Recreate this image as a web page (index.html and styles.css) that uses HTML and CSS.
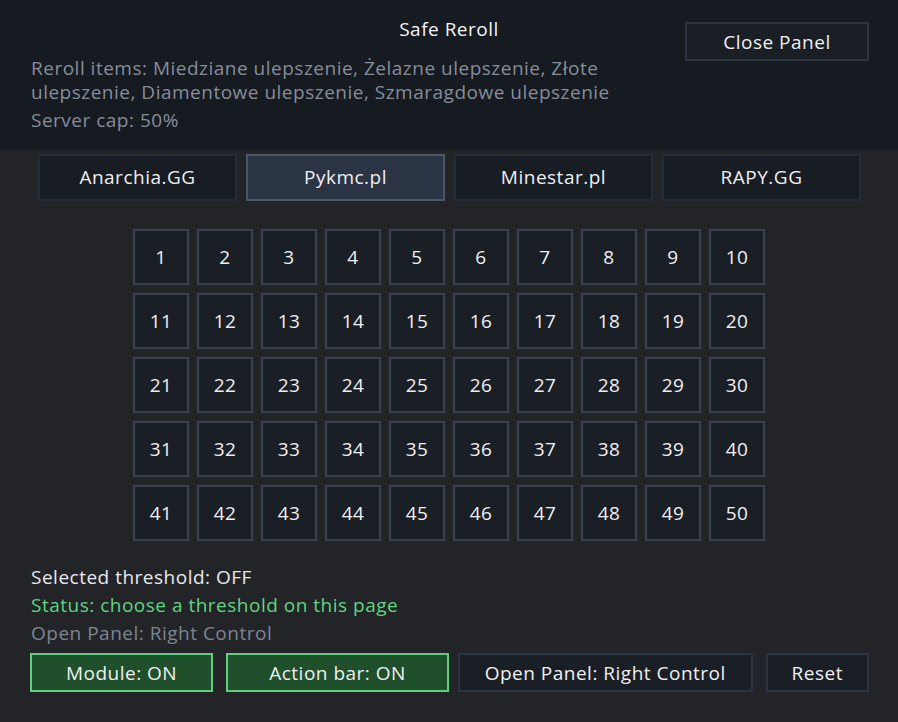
FILE: index.html
```html
<!DOCTYPE html>
<html>
<head>
  <meta charset="UTF-8">
  <meta name="viewport" content="width=device-width, initial-scale=1.0">
  <title>Safe Reroll</title>
  <link rel="stylesheet" href="styles.css">
</head>
<body>
  <div class="panel">
    <div class="header">
      <div class="header-text">
        <h1 class="title">Safe Reroll</h1>
        <p class="info">Reroll items: Miedziane ulepszenie, Żelazne ulepszenie, Złote ulepszenie, Diamentowe ulepszenie, Szmaragdowe ulepszenie</p>
        <p class="info">Server cap: 50%</p>
      </div>
      <button class="btn close-btn">Close Panel</button>
    </div>

    <div class="tabs">
      <button class="tab">Anarchia.GG</button>
      <button class="tab active">Pykmc.pl</button>
      <button class="tab">Minestar.pl</button>
      <button class="tab">RAPY.GG</button>
    </div>

    <div class="grid" id="threshold-grid"></div>

    <div class="state">
      <div class="line">Selected threshold: OFF</div>
      <div class="line status">Status: choose a threshold on this page</div>
      <div class="line muted">Open Panel: Right Control</div>
    </div>

    <div class="actions">
      <button class="btn on module-btn">Module: ON</button>
      <button class="btn on bar-btn">Action bar: ON</button>
      <button class="btn key-btn">Open Panel: Right Control</button>
      <button class="btn reset-btn">Reset</button>
    </div>
  </div>

  <script>
    // Build the 1..50 threshold buttons
    var grid = document.getElementById('threshold-grid');
    for (var i = 1; i <= 50; i++) {
      var cell = document.createElement('button');
      cell.className = 'cell';
      cell.textContent = i;
      grid.appendChild(cell);
    }
  </script>
</body>
</html>
```

FILE: styles.css
```css
/* Safe Reroll panel */
body {
  margin: 0;
  background-color: #232428;
  font-family: "Open Sans", Lato, sans-serif;
  letter-spacing: 0.5px;
  color: #e8eaee;
}
.panel {
  width: 898px;
  height: 722px;
}
.header {
  background-color: #161a21;
  height: 150px;
  box-sizing: border-box;
  padding: 22px 29px 0 31px;
  display: flex;
  align-items: flex-start;
}
.header-text {
  flex: 1;
}
.title {
  margin: -6px 0 14px 0;
  font-size: 19px;
  line-height: 26px;
  font-weight: normal;
  text-align: center;
  padding-left: 263px;
  width: 310px;
  color: #f2f3f5;
}
.info {
  margin: 0;
  font-size: 19px;
  line-height: 24px;
  color: #868d99;
  width: 610px;
}
.info + .info {
  margin-top: 4px;
}
.btn {
  font-family: inherit;
  letter-spacing: inherit;
  font-size: 19px;
  color: #eef0f2;
  background-color: #1a1e25;
  border: 2px solid #2b3440;
  height: 39px;
  padding: 0;
  cursor: pointer;
}
.close-btn {
  width: 184px;
}
.tabs {
  display: flex;
  gap: 9px;
  padding: 4px 37px 0 38px;
}
.tab {
  flex: 1;
  height: 47px;
  font-family: inherit;
  letter-spacing: inherit;
  font-size: 19px;
  color: #eef0f2;
  background-color: #181c23;
  border: 2px solid #262c35;
  padding-bottom: 3px;
  cursor: pointer;
}
.tab.active {
  background-color: #2b3444;
  border-color: #4b5669;
}
.grid {
  display: grid;
  grid-template-columns: repeat(10, 56px);
  grid-auto-rows: 56px;
  gap: 8px;
  justify-content: center;
  margin-top: 28px;
}
.cell {
  font-family: inherit;
  letter-spacing: inherit;
  font-size: 19px;
  color: #eef0f2;
  background-color: #1a1e25;
  border: 2px solid #3a414c;
  padding: 0;
  cursor: pointer;
}
.state {
  padding: 22px 31px 0 31px;
}
.line {
  font-size: 19px;
  line-height: 28px;
}
.status {
  color: #5fd581;
}
.muted {
  color: #7d8490;
}
.actions {
  display: flex;
  gap: 13px;
  padding: 6px 29px 0 30px;
}
.btn.on {
  background-color: #1f4f2b;
  border-color: #5fcf7d;
}
.module-btn {
  width: 184px;
}
.bar-btn {
  width: 224px;
  margin-right: -4px;
}
.key-btn {
  width: 296px;
}
.reset-btn {
  width: 104px;
}
```
